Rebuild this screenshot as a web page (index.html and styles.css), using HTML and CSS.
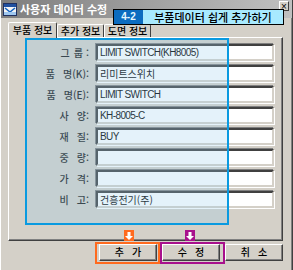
FILE: index.html
```html
<!DOCTYPE html>
<html lang="ko">
<head>
<meta charset="utf-8">
<link rel="stylesheet" href="styles.css">
</head>
<body>
<div class="window">
  <div class="titlebar">
    <svg class="appicon" width="14" height="13" viewBox="0 0 14 13">
      <rect x="0.5" y="0.5" width="13" height="12" fill="#f4f4f4" stroke="#203060"/>
      <rect x="1" y="1" width="12" height="3" fill="#2050a0"/>
      <path d="M2 5 L7 9 L12 5" stroke="#1060c0" stroke-width="1.5" fill="none"/>
      <rect x="1" y="9" width="12" height="3" fill="#a0c8f0"/>
    </svg>
    <span class="title">사용자 데이터 수정</span>
    <span class="closebtn">×</span>
  </div>
  <div class="body">
    <div class="tabs">
      <div class="tab active">부품 정보</div>
      <div class="tab">추가 정보</div>
      <div class="tab">도면 정보</div>
    </div>
    <div class="panel">
      <div class="row"><span class="label">그<i class="sp-s"></i>룹<i class="sp-c"></i>:</span><div class="field latin">LIMIT SWITCH(KH8005)</div></div>
      <div class="row"><span class="label">품<i class="sp"></i>명(K):</span><div class="field hangul">리미트스위치</div></div>
      <div class="row"><span class="label">품<i class="sp"></i>명(E):</span><div class="field latin">LIMIT SWITCH</div></div>
      <div class="row"><span class="label">사<i class="sp"></i>양:</span><div class="field latin">KH-8005-C</div></div>
      <div class="row"><span class="label">재<i class="sp"></i>질:</span><div class="field latin">BUY</div></div>
      <div class="row"><span class="label">중<i class="sp"></i>량:</span><div class="field"></div></div>
      <div class="row"><span class="label">가<i class="sp"></i>격:</span><div class="field"></div></div>
      <div class="row"><span class="label">비<i class="sp"></i>고:</span><div class="field hangul">건흥전기(주)</div></div>
    </div>
    <div class="buttons">
      <div class="btn">추<i class="sp"></i>가</div>
      <div class="btn">수<i class="sp"></i>정</div>
      <div class="btn">취<i class="sp"></i>소</div>
    </div>
  </div>

  <div class="banner"><span class="banner-num">4-2</span><span class="banner-text">부품데이터 쉽게 추가하기</span></div>
  <div class="hl-blue"></div>
  <div class="hl-orange"></div>
  <div class="hl-magenta"></div>
  <div class="marker marker-orange"><svg width="8" height="8" viewBox="0 0 8 8"><path d="M2.5 0 H5.5 V4 H8 L4 8 L0 4 H2.5 Z" fill="#fff"/></svg></div>
  <div class="marker marker-magenta"><svg width="8" height="8" viewBox="0 0 8 8"><path d="M2.5 0 H5.5 V4 H8 L4 8 L0 4 H2.5 Z" fill="#fff"/></svg></div>
</div>
</body>
</html>
```
FILE: styles.css
```css
* { box-sizing: border-box; }
html, body { margin: 0; padding: 0; }
body { width: 293px; height: 270px; overflow: hidden; background: #d4d0c8; font-family: "Liberation Sans", "Noto Sans CJK KR", sans-serif; font-size: 11px; color: #000; }

.window { position: relative; width: 293px; height: 270px; background: #d4d0c8; border-left: 1px solid #ffffff; border-right: 1px solid #404040; box-shadow: inset 1px 0 0 #d4d0c8, inset -1px 0 0 #808080; }

.titlebar { height: 18px; display: flex; align-items: center; padding: 0 3px 0 2px; background: linear-gradient(to right, #7e7e7e, #c0c0c0); color: #fff; }
.appicon { flex: none; margin-right: 3px; }
.title { font-family: "Noto Sans CJK KR", sans-serif; font-size: 11px; font-weight: bold; line-height: 18px; }
.closebtn { margin-left: auto; width: 10px; height: 10px; margin-top: -6px; background: #d4d0c8; color: #000; font-size: 10px; line-height: 9px; text-align: center; border: 1px solid; border-color: #fff #404040 #404040 #fff; }

.body { padding: 4px 9px 0 7px; }

.sp { display: inline-block; width: 8px; }
.sp-s { display: inline-block; width: 4px; }
.sp-c { display: inline-block; width: 3px; }

.tabs { display: flex; height: 15px; padding-left: 2px; }
.tab { width: 47px; margin-top: 2px; height: 13px; font-family: "Noto Sans CJK KR", sans-serif; font-size: 10px; font-weight: 500; line-height: 12px; text-align: center; border: 1px solid; border-color: #fff #404040 transparent #fff; border-bottom: none; border-radius: 2px 2px 0 0; white-space: nowrap; }
.tab.active { margin-top: 0; height: 16px; line-height: 14px; position: relative; z-index: 1; background: #d4d0c8; margin-left: -2px; width: 49px; }

.panel { height: 204px; border: 1px solid; border-color: #fff #404040 #404040 #fff; box-shadow: inset -1px -1px 0 #808080; padding: 6px 0 0 0; display: flex; flex-direction: column; gap: 4px; }
.row { display: flex; align-items: center; height: 17px; }
.label { width: 80px; text-align: right; font-family: "Noto Sans CJK KR", sans-serif; font-size: 10px; font-weight: 500; color: #1a1a1a; white-space: nowrap; }
.field { margin-left: 7px; width: 178px; height: 17px; background: #fff; border: 2px solid; border-color: #404040 #d4d0c8 #d4d0c8 #404040; box-shadow: -1px -1px 0 #808080, 1px 1px 0 #fff; padding-left: 2px; line-height: 13px; white-space: nowrap; overflow: hidden; }
.field.latin { font-family: "Liberation Sans", sans-serif; font-size: 10px; letter-spacing: -0.6px; }
.field.hangul { font-family: "Noto Sans CJK KR", sans-serif; font-size: 10px; letter-spacing: 0; }

.buttons { display: flex; justify-content: flex-end; gap: 5px; margin-top: 3px; }
.btn { width: 58px; height: 17px; text-align: center; font-family: "Noto Sans CJK KR", sans-serif; font-size: 10px; font-weight: 500; line-height: 14px; border: 1px solid; border-color: #fff #404040 #404040 #fff; box-shadow: inset -1px -1px 0 #808080; }

.banner { position: absolute; left: 112px; top: 9px; width: 171px; height: 16px; display: flex; border: 1px solid #000; background: #a8eaff; }
.banner-num { width: 29px; background: #0c6cc0; color: #e8f8ff; font-weight: bold; font-size: 10px; text-align: center; line-height: 14px; }
.banner-text { flex: 1; text-align: center; font-family: "Noto Sans CJK KR", sans-serif; font-size: 11px; font-weight: 500; line-height: 14px; color: #000; }

.hl-blue { position: absolute; left: 24px; top: 38px; width: 204px; height: 187px; border: 2px solid #0a9ae0; background: rgba(150, 204, 235, 0.26); }
.hl-orange { position: absolute; left: 94px; top: 242px; width: 65px; height: 22px; border: 2px solid #ff6a1e; }
.hl-magenta { position: absolute; left: 159px; top: 242px; width: 65px; height: 22px; border: 2px solid #a8108c; }
.marker { position: absolute; width: 10px; height: 11px; display: flex; align-items: center; justify-content: center; }
.marker-orange { left: 123px; top: 230px; background: #ff6a1e; }
.marker-magenta { left: 184px; top: 230px; background: #a8108c; }
```
